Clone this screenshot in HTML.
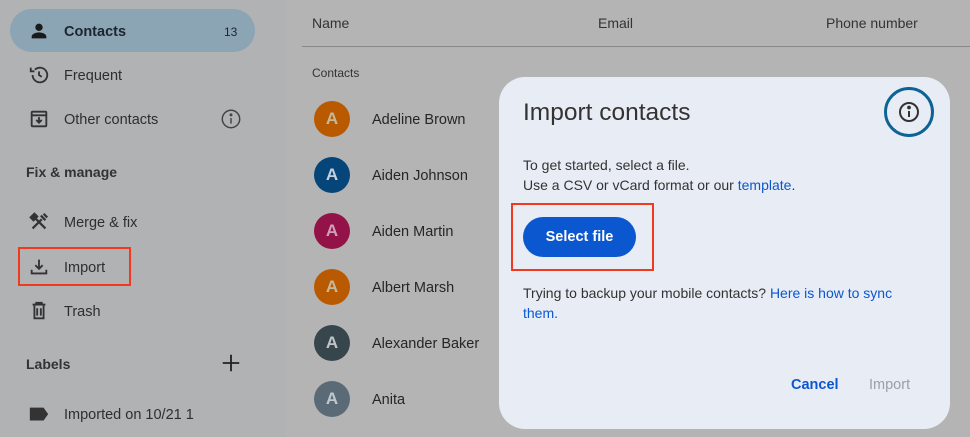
<!DOCTYPE html>
<html><head><meta charset="utf-8"><style>
*{box-sizing:border-box;margin:0;padding:0}
body{width:970px;height:437px;overflow:hidden;background:#b4b4b4;font-family:"Liberation Sans",Arial,sans-serif;position:relative;color:#1f1f1f}
.side{position:absolute;left:0;top:0;width:286px;height:437px;background:#b1b2b4}
.abs{position:absolute}
.nav{position:absolute;left:64px;font-size:14.5px;color:#2e2e2e}
.ic{position:absolute;left:28px}
.av{position:absolute;left:314px;width:36px;height:36px;border-radius:50%;color:#c8b89a;font-size:17px;font-weight:bold;text-align:center;line-height:36px}
.nm{position:absolute;left:372px;font-size:14.5px;color:#262626}
.dlg{position:absolute;left:499px;top:77px;width:451px;height:352px;background:#e8ecf4;border-radius:26px}
.link{color:#0b57d0}
</style></head><body>
<div class="side"></div>
<div class="abs" style="left:10px;top:9px;width:245px;height:43px;border-radius:22px;background:#8ba5b5"></div>
<svg class="ic" style="top:20px" width="22" height="22" viewBox="0 0 24 24"><circle cx="12" cy="8" r="4" fill="#1a1a1a"/><path d="M4 20v-2c0-3 5-4.5 8-4.5s8 1.5 8 4.5v2z" fill="#1a1a1a"/></svg>
<div class="nav" style="top:24px;font-weight:bold;color:#1b2530">Contacts</div>
<div class="abs" style="left:224px;top:25px;font-size:12px;color:#1b2530">13</div>
<svg class="ic" style="top:64px" width="22" height="22" viewBox="0 0 24 24" fill="none" stroke="#333" stroke-width="2"><path d="M5 12a8 8 0 1 0 2.5-5.8"/><path d="M3 4v4h4"/><path d="M12 8v4l3 2"/></svg>
<div class="nav" style="top:68px">Frequent</div>
<svg class="ic" style="top:108px" width="22" height="22" viewBox="0 0 24 24" fill="none" stroke="#333" stroke-width="2"><rect x="4" y="4" width="16" height="16" rx="1"/><path d="M4 8h16M12 10v6M9 13l3 3 3-3"/></svg>
<div class="nav" style="top:112px">Other contacts</div>
<svg class="abs" style="left:220px;top:108px" width="22" height="22" viewBox="0 0 24 24" fill="none" stroke="#444" stroke-width="1.6"><circle cx="12" cy="12" r="9.5"/><path d="M12 11v6"/><circle cx="12" cy="7.5" r="0.8" fill="#444"/></svg>
<div class="abs" style="left:26px;top:164px;font-size:14px;font-weight:bold;color:#333">Fix &amp; manage</div>
<svg class="ic" style="top:211px" width="22" height="22" viewBox="0 0 24 24" fill="none" stroke="#333" stroke-width="2.4"><path d="M5 19L15 9M19 19L8 8"/><path d="M3 7l4-4 3 3-4 4z" fill="#333"/><path d="M14 5l5 5M17 3l4 4" /></svg>
<div class="nav" style="top:215px">Merge &amp; fix</div>
<div class="abs" style="left:18px;top:247px;width:113px;height:39px;border:2px solid #f0391e"></div>
<svg class="ic" style="top:256px" width="22" height="22" viewBox="0 0 24 24" fill="none" stroke="#333" stroke-width="2"><path d="M12 4v10M8 10l4 4 4-4M4 15v4h16v-4"/></svg>
<div class="nav" style="top:260px">Import</div>
<svg class="ic" style="top:300px" width="22" height="22" viewBox="0 0 24 24" fill="none" stroke="#333" stroke-width="2"><path d="M5 5h14M9 5V3h6v2M7 5v15h10V5M10 9v8M14 9v8"/></svg>
<div class="nav" style="top:304px">Trash</div>
<div class="abs" style="left:26px;top:356px;font-size:14px;font-weight:bold;color:#333">Labels</div>
<svg class="abs" style="left:220px;top:352px" width="22" height="22" viewBox="0 0 24 24" stroke="#222" stroke-width="2"><path d="M12 3v18M3 12h18"/></svg>
<svg class="ic" style="top:404px" width="22" height="22" viewBox="0 0 24 24"><path d="M2 4h15l5 7-5 7H2z" fill="#333"/></svg>
<div class="nav" style="top:407px">Imported on 10/21 1</div>

<div class="abs" style="left:312px;top:15px;font-size:14px;color:#333">Name</div>
<div class="abs" style="left:598px;top:15px;font-size:14px;color:#333">Email</div>
<div class="abs" style="left:826px;top:15px;font-size:14px;color:#333">Phone number</div>
<div class="abs" style="left:302px;top:46px;width:668px;height:1px;background:#888"></div>
<div class="abs" style="left:312px;top:66px;font-size:12px;color:#333">Contacts</div>

<div class="av" style="top:101px;background:#b95a00">A</div><div class="nm" style="top:112px">Adeline Brown</div>
<div class="av" style="top:157px;background:#05457a;color:#c8d0dc">A</div><div class="nm" style="top:168px">Aiden Johnson</div>
<div class="av" style="top:213px;background:#931348;color:#d0a0b8">A</div><div class="nm" style="top:224px">Aiden Martin</div>
<div class="av" style="top:269px;background:#b95a00">A</div><div class="nm" style="top:280px">Albert Marsh</div>
<div class="av" style="top:325px;background:#37464d;color:#c0c4c8">A</div><div class="nm" style="top:336px">Alexander Baker</div>
<div class="av" style="top:381px;background:#5a6b77;color:#c0c8ce">A</div><div class="nm" style="top:392px">Anita</div>

<div class="dlg">
<div class="abs" style="left:24px;top:22px;font-size:24.5px;color:#333">Import contacts</div>
<div class="abs" style="left:385px;top:10px;width:50px;height:50px;border:3px solid #0d6394;border-radius:50%"></div>
<svg class="abs" style="left:398px;top:23px" width="24" height="24" viewBox="0 0 24 24" fill="none" stroke="#333" stroke-width="2"><circle cx="12" cy="12" r="9"/><path d="M12 11v6"/><circle cx="12" cy="7.5" r="0.9" fill="#333"/></svg>
<div class="abs" style="left:24px;top:78px;font-size:14px;line-height:20px;color:#333">To get started, select a file.<br>Use a CSV or vCard format or our <span class="link">template</span>.</div>
<div class="abs" style="left:12px;top:126px;width:143px;height:68px;border:2px solid #f0391e"></div>
<div class="abs" style="left:24px;top:140px;width:113px;height:40px;border-radius:20px;background:#0b57d0;color:#fff;font-size:14.5px;font-weight:bold;text-align:center;line-height:40px">Select file</div>
<div class="abs" style="left:24px;top:206px;font-size:14px;line-height:20px;color:#333;width:400px">Trying to backup your mobile contacts? <span class="link">Here is how to sync them.</span></div>
<div class="abs" style="left:292px;top:300px;font-size:14.5px;font-weight:bold;color:#0b57d0">Cancel</div>
<div class="abs" style="left:370px;top:300px;font-size:14.5px;color:#9aa0a6">Import</div>
</div>
</body></html>
